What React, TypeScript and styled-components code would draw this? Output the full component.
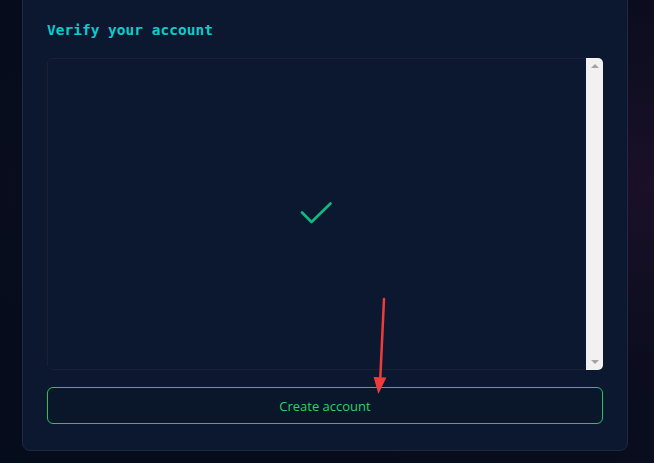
import React from "react";
import styled, { createGlobalStyle } from "styled-components";

const Global = createGlobalStyle`
  html, body { margin: 0; padding: 0; }
  body {
    width: 654px;
    height: 463px;
    overflow: hidden;
    background: radial-gradient(ellipse at 100% 40%, #1a1028 0%, #0b0d1e 45%, #050c1c 100%);
    font-family: "Open Sans", "Noto Sans", sans-serif;
  }
`;

const Page = styled.div`
  position: relative;
  display: flow-root;
  width: 654px;
  height: 463px;
  padding-left: 22px;
  box-sizing: border-box;
`;

const Card = styled.section`
  width: 606px;
  margin-top: -12px;
  box-sizing: border-box;
  background: #0c1730;
  border: 1px solid #1f2a3e;
  border-radius: 8px;
  padding: 32px 24px 26px 24px;
  display: flex;
  flex-direction: column;
`;

const Title = styled.h2`
  margin: 0;
  font-family: "DejaVu Sans Mono", "Liberation Mono", monospace;
  font-weight: bold;
  font-size: 14.5px;
  line-height: 18px;
  color: #0ccccb;
`;

const Frame = styled.div`
  margin-top: 19px;
  height: 312px;
  display: flex;
  border-radius: 5px;
  overflow: hidden;
`;

const FrameContent = styled.div`
  flex: 1;
  border: 1px solid #192133;
  border-right: none;
  border-radius: 5px 0 0 5px;
  display: flex;
  align-items: center;
  justify-content: center;
  box-sizing: border-box;
`;

const Scrollbar = styled.div`
  width: 17px;
  background: #f1f1f1;
  display: flex;
  flex-direction: column;
  justify-content: space-between;
  align-items: center;
  padding: 6px 0;
  box-sizing: border-box;
`;

const Arrow = styled.div<{ $dir: "up" | "down" }>`
  width: 0;
  height: 0;
  border-left: 4px solid transparent;
  border-right: 4px solid transparent;
  ${(p) =>
    p.$dir === "up"
      ? "border-bottom: 4px solid #a3a3a3;"
      : "border-top: 4px solid #a3a3a3;"}
`;

const Button = styled.button`
  margin-top: 17px;
  height: 37px;
  width: 100%;
  background: #0a1629;
  border: 1.5px solid #22c55e;
  border-radius: 6px;
  color: #2fd066;
  font-family: "Open Sans", "Noto Sans", sans-serif;
  font-size: 13px;
  cursor: pointer;
`;

const Overlay = styled.svg`
  position: absolute;
  left: 0;
  top: 0;
  pointer-events: none;
`;

export default function App() {
  return (
    <Page>
      <Global />
      <Card>
        <Title>Verify your account</Title>
        <Frame>
          <FrameContent>
            <svg width="34" height="24" viewBox="0 0 34 24">
              <polyline
                points="2,10.5 11.5,20 30.5,1.5"
                fill="none"
                stroke="#10b981"
                strokeWidth="2.6"
                strokeLinecap="round"
                strokeLinejoin="round"
              />
            </svg>
          </FrameContent>
          <Scrollbar>
            <Arrow $dir="up" />
            <Arrow $dir="down" />
          </Scrollbar>
        </Frame>
        <Button>Create account</Button>
      </Card>
      <Overlay width="654" height="463" viewBox="0 0 654 463">
        <line x1="384" y1="299" x2="380.3" y2="378" stroke="#ef3b3b" strokeWidth="2.5" strokeLinecap="round" />
        <polygon points="378.4,394 373.6,377 386.4,377.6" fill="#ef3b3b" />
      </Overlay>
    </Page>
  );
}
